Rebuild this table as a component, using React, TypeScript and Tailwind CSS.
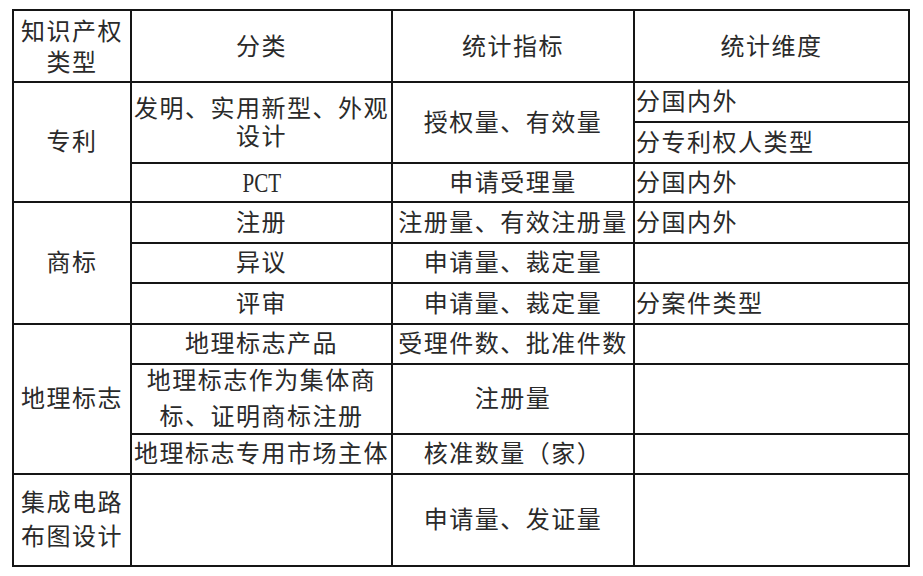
const rows = "grid-rows-[70px_38px_39px_37px_39px_38px_39px_38px_68px_38px_90px]";

function Cell({
  className = "",
  children,
}: {
  className?: string;
  children?: React.ReactNode;
}) {
  return (
    <div className={`flex items-center justify-center bg-white text-center ${className}`}>
      {children}
    </div>
  );
}

function Left({ className = "", children }: { className?: string; children?: React.ReactNode }) {
  return <div className={`flex items-center bg-white pl-[1px] ${className}`}>{children}</div>;
}

export default function App() {
  return (
    <div className="min-h-[576px] w-[923px] bg-white pl-[12px] pt-[9px]">
      <div
        className={`grid w-[898px] grid-cols-[116px_259px_240px_273px] ${rows} gap-[2px] bg-[#151515] p-[2px] text-[24px] tracking-[1.5px] text-[#2a2a2a]`}
        style={{ fontFamily: '"Liberation Serif", "Noto Sans CJK SC", serif' }}
      >
        {/* header */}
        <Cell className="pt-[3px] leading-[31px]">
          知识产权
          <br />
          类型
        </Cell>
        <Cell className="pt-[2px]">分类</Cell>
        <Cell className="pt-[2px]">统计指标</Cell>
        <Cell className="pt-[2px]">统计维度</Cell>

        {/* 专利 */}
        <Cell className="row-span-3">专利</Cell>
        <Cell className="row-span-2 whitespace-nowrap leading-[28px]">
          发明、实用新型、外观
          <br />
          设计
        </Cell>
        <Cell className="row-span-2">授权量、有效量</Cell>
        <Left>分国内外</Left>
        <Left>分专利权人类型</Left>
        <Cell className="pt-[2px] text-[27px] leading-none tracking-normal">
          <span className="inline-block scale-x-[0.78]">PCT</span>
        </Cell>
        <Cell>申请受理量</Cell>
        <Left>分国内外</Left>

        {/* 商标 */}
        <Cell className="row-span-3">商标</Cell>
        <Cell>注册</Cell>
        <Cell className="whitespace-nowrap">注册量、有效注册量</Cell>
        <Left>分国内外</Left>
        <Cell>异议</Cell>
        <Cell>申请量、裁定量</Cell>
        <Left />
        <Cell>评审</Cell>
        <Cell>申请量、裁定量</Cell>
        <Left>分案件类型</Left>

        {/* 地理标志 */}
        <Cell className="row-span-3 whitespace-nowrap">地理标志</Cell>
        <Cell>地理标志产品</Cell>
        <Cell className="whitespace-nowrap">受理件数、批准件数</Cell>
        <Left />
        <Cell className="leading-[36px]">
          地理标志作为集体商
          <br />
          标、证明商标注册
        </Cell>
        <Cell>注册量</Cell>
        <Left />
        <Cell className="whitespace-nowrap">地理标志专用市场主体</Cell>
        <Cell>核准数量（家）</Cell>
        <Left />

        {/* 集成电路布图设计 */}
        <Cell className="leading-[34px]">
          集成电路
          <br />
          布图设计
        </Cell>
        <Cell />
        <Cell>申请量、发证量</Cell>
        <Left />
      </div>
    </div>
  );
}
